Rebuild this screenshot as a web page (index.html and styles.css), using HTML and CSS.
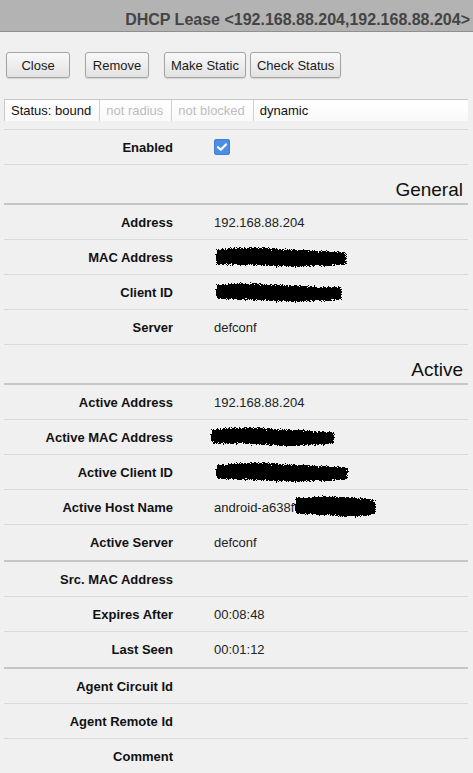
FILE: index.html
```html
<!DOCTYPE html>
<html>
<head>
<meta charset="utf-8">
<link rel="stylesheet" href="styles.css">
</head>
<body>
<svg class="defs" width="0" height="0">
  <defs>
    <filter id="scribble" x="-10%" y="-40%" width="120%" height="180%" color-interpolation-filters="sRGB">
      <feTurbulence type="fractalNoise" baseFrequency="0.5" numOctaves="2" seed="3" result="t"/>
      <feDisplacementMap in="SourceGraphic" in2="t" scale="6" xChannelSelector="R" yChannelSelector="G" result="shape"/>
      <feGaussianBlur in="shape" stdDeviation="2.5" result="soft"/>
      <feTurbulence type="fractalNoise" baseFrequency="1.6" numOctaves="1" seed="7" result="n"/>
      <feColorMatrix in="n" type="matrix" values="0 0 0 0 0  0 0 0 0 0  0 0 0 0 0  1 0 0 0 0" result="na"/>
      <feComposite in="soft" in2="na" operator="arithmetic" k1="0" k2="1.1" k3="0.9" k4="-0.7" result="mix"/>
      <feComponentTransfer in="mix">
        <feFuncA type="discrete" tableValues="0 0 1 1"/>
      </feComponentTransfer>
    </filter>
  </defs>
</svg>
<div class="titlebar">DHCP Lease &lt;192.168.88.204,192.168.88.204&gt;</div>
<div class="toolbar">
  <button class="btn wide gap">Close</button>
  <button class="btn wide gap">Remove</button>
  <button class="btn gap-sm">Make Static</button>
  <button class="btn">Check Status</button>
</div>
<div class="statusbar">
  <span class="cell">Status: bound</span>
  <span class="cell off">not radius</span>
  <span class="cell off">not blocked</span>
  <span class="cell last">dynamic</span>
</div>
<div class="form">
  <div class="row first"><div class="label">Enabled</div><div class="value"><span class="check"><svg width="16" height="16" viewBox="0 0 16 16"><path d="M4 8.2 L6.8 10.8 L12 5.4" fill="none" stroke="#fff" stroke-width="2.2" stroke-linecap="round" stroke-linejoin="round"/></svg></span></div></div>
  <div class="section">General</div>
  <div class="row"><div class="label">Address</div><div class="value">192.168.88.204</div></div>
  <div class="row"><div class="label">MAC Address</div><div class="value"><svg class="redact" width="146" height="30" viewBox="0 0 146 30"><path d="M7 6 Q40 3 80 6 T139 8 L140 24 Q100 27 60 25 T6 24 Z" fill="#0d0d0d" filter="url(#scribble)"/></svg></div></div>
  <div class="row"><div class="label">Client ID</div><div class="value"><svg class="redact" width="142" height="30" viewBox="0 0 142 30"><path d="M7 6 Q40 4 80 7 T135 8 L136 24 Q100 27 60 25 T6 23 Z" fill="#0d0d0d" filter="url(#scribble)"/></svg></div></div>
  <div class="row"><div class="label">Server</div><div class="value">defconf</div></div>
  <div class="section">Active</div>
  <div class="row"><div class="label">Active Address</div><div class="value">192.168.88.204</div></div>
  <div class="row"><div class="label">Active MAC Address</div><div class="value"><svg class="redact shift" width="140" height="30" viewBox="0 0 140 30"><path d="M7 6 Q40 3 80 6 T132 8 L133 23 Q100 26 60 24 T6 23 Z" fill="#0d0d0d" filter="url(#scribble)"/></svg></div></div>
  <div class="row"><div class="label">Active Client ID</div><div class="value"><svg class="redact" width="148" height="30" viewBox="0 0 148 30"><path d="M7 7 Q40 3 80 6 T141 8 L141 24 Q100 27 60 25 T6 23 Z" fill="#0d0d0d" filter="url(#scribble)"/></svg></div></div>
  <div class="row"><div class="label">Active Host Name</div><div class="value">android-a638<span class="tail">f<svg class="redact over" width="96" height="30" viewBox="0 0 96 30"><path d="M7 5 Q30 2 60 4 T89 6 L90 23 Q70 27 45 25 T6 23 Z" fill="#0d0d0d" filter="url(#scribble)"/></svg></span></div></div>
  <div class="row sep"><div class="label">Active Server</div><div class="value">defconf</div></div>
  <div class="row"><div class="label">Src. MAC Address</div><div class="value"></div></div>
  <div class="row"><div class="label">Expires After</div><div class="value">00:08:48</div></div>
  <div class="row sep"><div class="label">Last Seen</div><div class="value">00:01:12</div></div>
  <div class="row"><div class="label">Agent Circuit Id</div><div class="value"></div></div>
  <div class="row"><div class="label">Agent Remote Id</div><div class="value"></div></div>
  <div class="row"><div class="label">Comment</div><div class="value"></div></div>
</div>
</body>
</html>
```

FILE: styles.css
```css
* { box-sizing: border-box; }
html, body {
  margin: 0;
  padding: 0;
  background: #f0f0f0;
  font-family: "Liberation Sans", Arial, sans-serif;
  font-size: 13px;
  color: #111;
}
.defs { position: absolute; width: 0; height: 0; }
.titlebar {
  height: 32px;
  background: #b3b3b3;
  border-bottom: 1px solid #8f8f8f;
  color: #444;
  font-weight: bold;
  font-size: 16px;
  line-height: 18px;
  padding: 11px 3px 0 0;
  text-align: right;
  white-space: nowrap;
  overflow: hidden;
}
.toolbar {
  display: flex;
  padding: 20px 0 0 6px;
  height: 46px;
}
.btn {
  height: 26px;
  padding: 0 6px;
  border: 1px solid #a3a3a3;
  border-radius: 3px;
  background: linear-gradient(#f9f9f9, #e2e2e2);
  box-shadow: 0 1px 1px rgba(0,0,0,0.12);
  font-family: "Liberation Sans", Arial, sans-serif;
  font-size: 13px;
  color: #1a1a1a;
}
.btn.wide { min-width: 64px; }
.btn.gap { margin-right: 15px; }
.btn.gap-sm { margin-right: 4px; }
.statusbar {
  display: flex;
  margin: 21px 5px 0 4px;
  height: 22px;
  background: linear-gradient(#ffffff, #f9f9f9);
  border-top: 1px solid #c8c8c8;
  border-left: 1px solid #c8c8c8;
}
.cell {
  line-height: 21px;
  padding: 0 8px 0 6px;
  border-right: 1px solid #cfcfcf;
  color: #111;
}
.cell.off { color: #bdbdbd; }
.cell.last { border-right: none; flex: 1; }
.form {
  margin: 8px 5px 0 4px;
}
.row {
  display: grid;
  grid-template-columns: 169px 1fr;
  column-gap: 41px;
  height: 35px;
  border-bottom: 1px solid #dadada;
  align-items: center;
}
.row.first { border-top: 1px solid #dadada; height: 36px; }
.row.sep { height: 37px; border-bottom: 2px solid #c6c6c6; }
.label {
  text-align: right;
  font-weight: bold;
  color: #111;
  white-space: nowrap;
}
.value {
  color: #222;
  display: flex;
  align-items: center;
  white-space: nowrap;
}
.check {
  display: inline-flex;
  width: 16px;
  height: 16px;
  border-radius: 3px;
  background: #4a8fe2;
  box-shadow: inset 0 0 0 1px #3d7fd0;
}
.section {
  height: 40px;
  padding: 14px 5px 0 0;
  font-size: 19px;
  line-height: 22px;
  text-align: right;
  color: #111;
  border-bottom: 2px solid #c6c6c6;
}
.redact { display: block; margin-left: -6px; }
.redact.shift { margin-left: -11px; }
.tail { position: relative; display: inline-block; }
.redact.over { position: absolute; left: -4px; top: -8px; margin: 0; }
```
